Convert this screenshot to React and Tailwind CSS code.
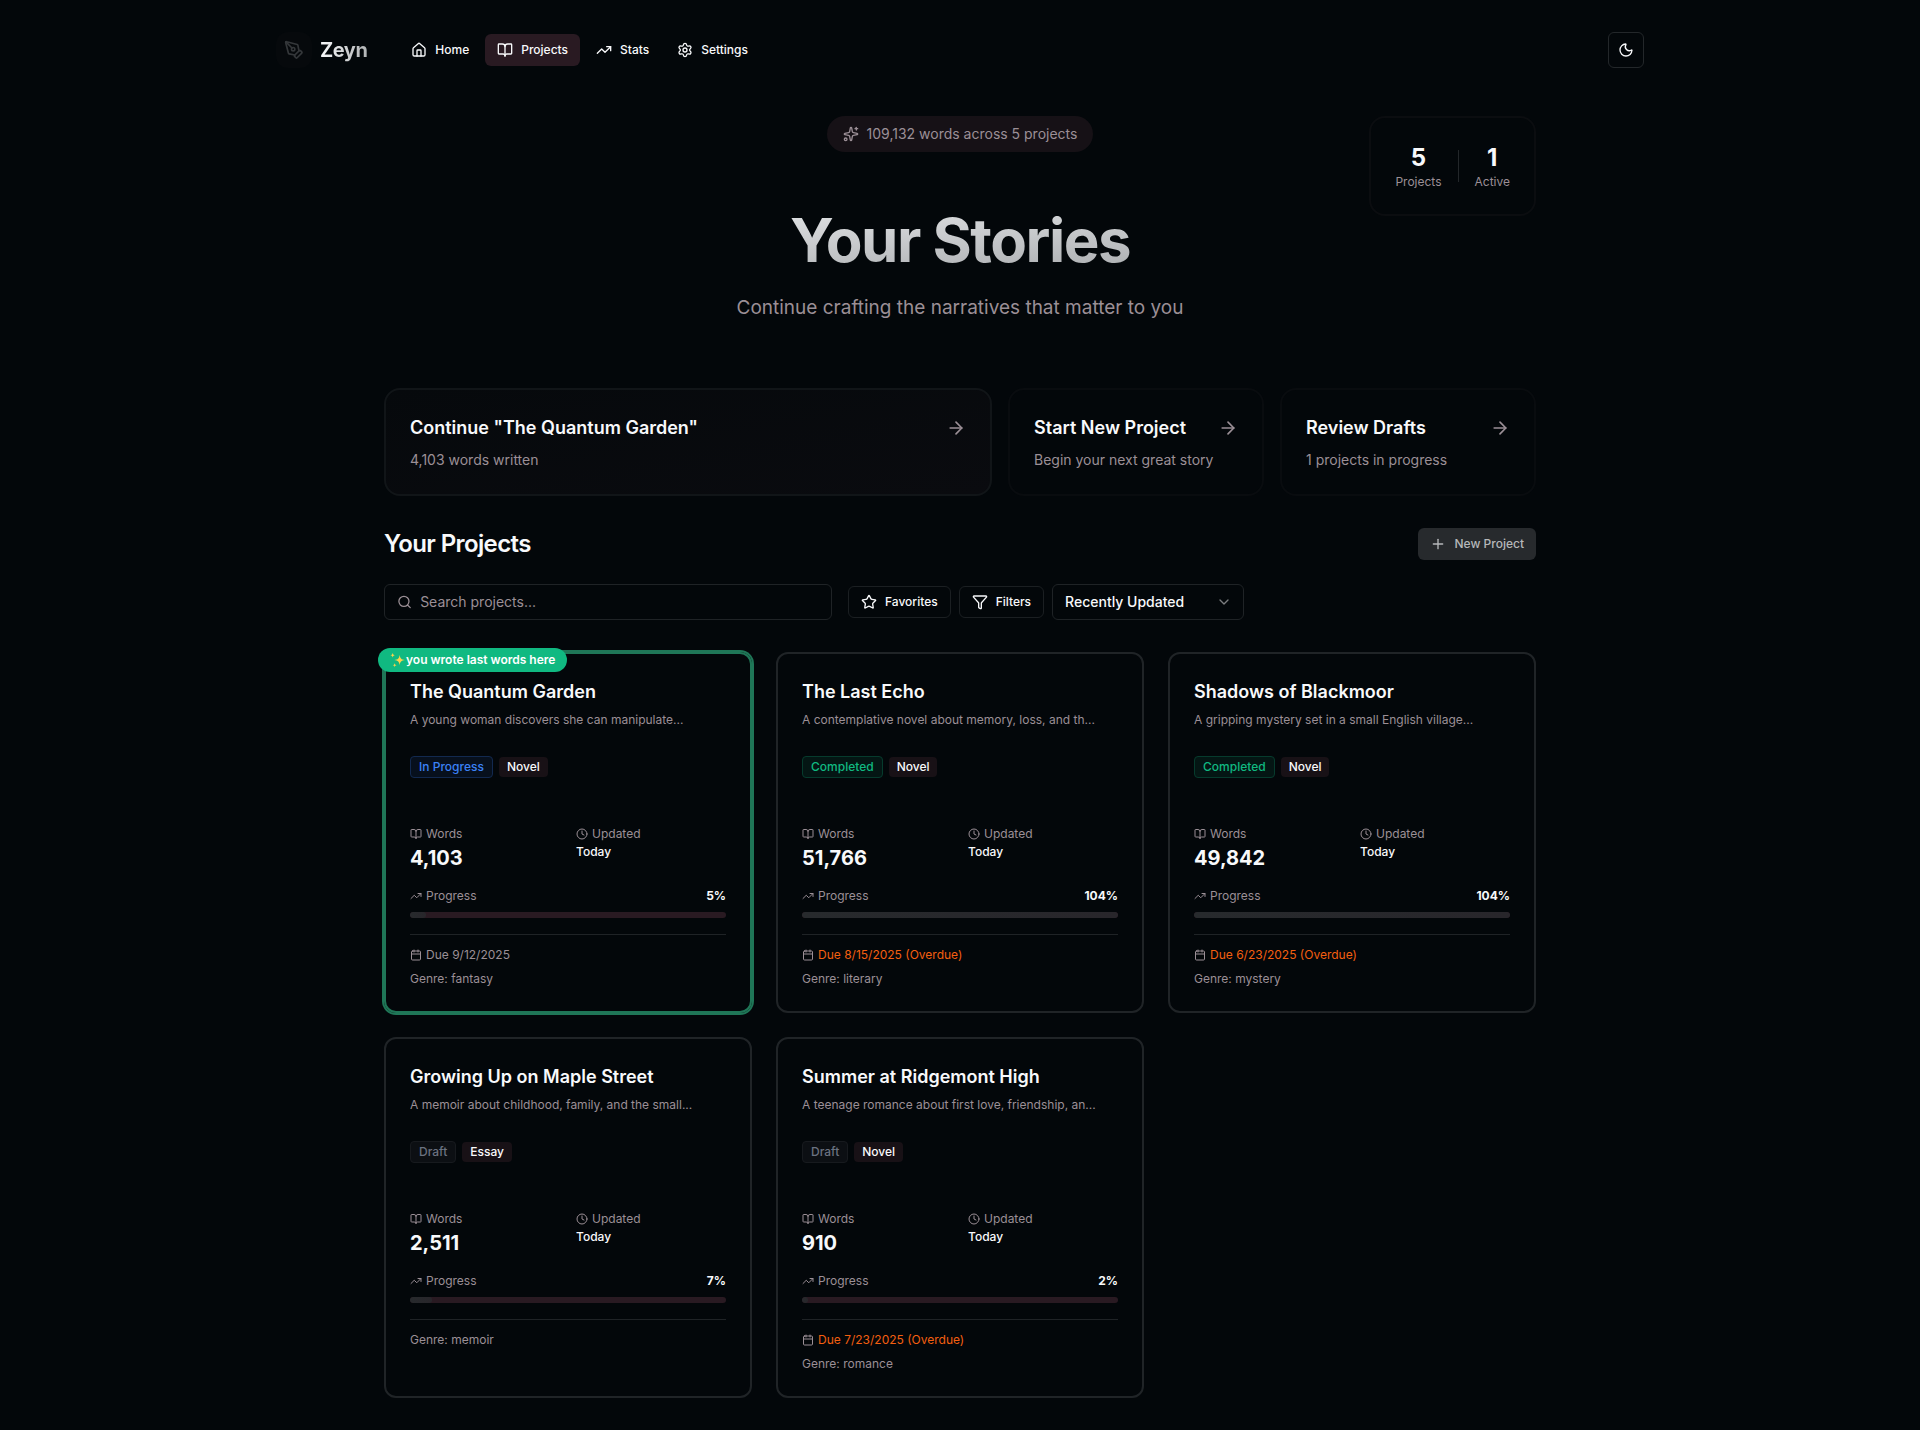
import React from "react";
import {
  Home,
  BookOpen,
  TrendingUp,
  Settings,
  Moon,
  PenTool,
  Sparkles,
  ArrowRight,
  Plus,
  Search,
  Star,
  Funnel,
  ChevronDown,
  Clock,
  Calendar,
} from "lucide-react";

const navItems = [
  { label: "Home", Icon: Home },
  { label: "Projects", Icon: BookOpen, active: true },
  { label: "Stats", Icon: TrendingUp },
  { label: "Settings", Icon: Settings },
];

const projects = [
  { title: "The Quantum Garden", desc: "A young woman discovers she can manipulate...", status: "In Progress", type: "Novel", words: "4,103", percent: 5, due: "9/12/2025", genre: "fantasy", latest: true },
  { title: "The Last Echo", desc: "A contemplative novel about memory, loss, and th...", status: "Completed", type: "Novel", words: "51,766", percent: 104, due: "8/15/2025", overdue: true, genre: "literary" },
  { title: "Shadows of Blackmoor", desc: "A gripping mystery set in a small English village...", status: "Completed", type: "Novel", words: "49,842", percent: 104, due: "6/23/2025", overdue: true, genre: "mystery" },
  { title: "Growing Up on Maple Street", desc: "A memoir about childhood, family, and the small...", status: "Draft", type: "Essay", words: "2,511", percent: 7, genre: "memoir" },
  { title: "Summer at Ridgemont High", desc: "A teenage romance about first love, friendship, an...", status: "Draft", type: "Novel", words: "910", percent: 2, due: "7/23/2025", overdue: true, genre: "romance" },
];

const statusStyles = {
  "In Progress": "border-[#12294f] bg-[#07101d] text-[#3b82f6]",
  Completed: "border-[#063b2d] bg-[#041614] text-[#10b981]",
  Draft: "border-[#171a1e] bg-[#0c0f13] text-[#6b7280]",
};

function Header() {
  return (
    <header className="mx-auto flex w-full max-w-[1400px] items-center justify-between px-4 py-8">
      <div className="flex items-center gap-8">
        <a href="#" className="flex items-center gap-2">
          <span className="flex size-9 items-center justify-center rounded-xl bg-[#06090c] text-[#34373a]">
            <PenTool className="size-5" />
          </span>
          <span className="bg-linear-to-r from-[#f8f9fb] to-[#b2b4b6] bg-clip-text text-xl font-bold tracking-tight text-transparent">
            Zeyn
          </span>
        </a>
        <nav className="flex items-center gap-1">
          {navItems.map(({ label, Icon, active }) => (
            <a
              key={label}
              href="#"
              className={`flex h-8 items-center gap-2 rounded-md px-3 text-xs font-medium ${active ? "bg-[#291a22]" : ""}`}
            >
              <Icon className="size-4" />
              {label}
            </a>
          ))}
        </nav>
      </div>
      <button aria-label="Toggle theme" className="flex size-9 items-center justify-center rounded-md border border-[#23272a]">
        <Moon className="size-4" />
      </button>
    </header>
  );
}

function Stat({ value, label }) {
  return (
    <div className="text-center">
      <div className="text-2xl leading-8 font-bold">{value}</div>
      <div className="text-xs text-[#9b8f96]">{label}</div>
    </div>
  );
}

function Hero() {
  return (
    <section className="relative flex flex-col items-center pt-4">
      <div className="flex h-9 items-center gap-2 rounded-full bg-[#161116] px-4 text-sm text-[#9b8f96]">
        <Sparkles className="size-4" />
        109,132 words across 5 projects
      </div>
      <div className="absolute top-4 right-0 flex h-[100px] items-center gap-4 rounded-2xl border-2 border-[#0b0d10] px-6">
        <Stat value="5" label="Projects" />
        <div className="h-8 w-px bg-[#23272a]" />
        <Stat value="1" label="Active" />
      </div>
      <h1 className="mt-12 w-full bg-linear-to-br from-[#f8f9fb] to-[#96999c] bg-clip-text text-center text-6xl leading-[80px] font-bold tracking-tight text-transparent">
        Your Stories
      </h1>
      <p className="mt-3 text-[19px] leading-8 text-[#9b8f96]">Continue crafting the narratives that matter to you</p>
    </section>
  );
}

function ActionCard({ title, text, featured }) {
  return (
    <a
      href="#"
      className={`rounded-2xl border-2 p-6 ${featured ? "border-[#111518] bg-linear-to-br from-[#06090c] to-[#0a0b0f]" : "border-[#090c0f]"}`}
    >
      <div className="mb-2 flex items-center justify-between">
        <h3 className="text-lg leading-7 font-semibold">{title}</h3>
        <ArrowRight className="size-5 text-[#9b8f96]" />
      </div>
      <p className="text-sm text-[#9b8f96]">{text}</p>
    </a>
  );
}

function Toolbar() {
  const outline = "flex h-8 items-center gap-2 rounded-md border border-[#1b1f22] px-3 text-xs font-medium";
  return (
    <div className="mt-6 flex items-center gap-4">
      <label className="flex h-9 w-full max-w-md items-center gap-2 rounded-md border border-[#1f2326] px-3 text-[#9b8f96]">
        <Search className="size-4" />
        <input
          type="search"
          aria-label="Search projects"
          placeholder="Search projects..."
          className="w-full bg-transparent text-sm text-white outline-none placeholder:text-[#9b8f96]"
        />
      </label>
      <div className="flex items-center gap-2">
        <button className={outline}>
          <Star className="size-4" />
          Favorites
        </button>
        <button className={outline}>
          <Funnel className="size-4" />
          Filters
        </button>
        <div className="relative flex items-center">
          <select
            aria-label="Sort projects"
            className="h-9 w-48 appearance-none rounded-md border border-[#1f2326] bg-[#03070a] px-3 text-sm font-medium outline-none"
          >
            <option>Recently Updated</option>
            <option>Title</option>
            <option>Word Count</option>
          </select>
          <ChevronDown className="pointer-events-none absolute right-3 size-4 text-[#7b7d80]" />
        </div>
      </div>
    </div>
  );
}

function ProjectCard({ project }) {
  const { title, desc, status, type, words, percent, due, overdue, genre, latest } = project;
  return (
    <article
      className={`relative rounded-xl border-2 p-6 text-xs text-[#9b8f96] ${latest ? "border-[#1f7657] ring-2 ring-[#1f7657]" : "border-[#202427]"}`}
    >
      {latest && (
        <div className="absolute -top-1.5 -left-2 flex h-6 items-center rounded-full bg-[#10b981] px-3 font-semibold text-white">
          <svg viewBox="0 0 24 24" className="size-4" fill="#fcd34d" aria-hidden="true">
            <path d="M14.500 4c.7 5.500 2.300 7.300 8 8-5.700.7-7.300 2.500-8 8-.7-5.500-2.300-7.300-8-8 5.700-.7 7.300-2.500 8-8Z" />
            <path d="M4 1c.4 2.600 1 3.300 3.500 3.700C5 5.100 4.400 5.800 4 8.400 3.600 5.800 3 5.100.5 4.700 3 4.300 3.600 3.600 4 1ZM7 16.500c.3 2.300.9 3 3 3.300-2.100.3-2.700 1-3 3.200-.3-2.200-.9-2.900-3-3.200 2.100-.3 2.700-1 3-3.300Z" />
          </svg>
          you wrote last words here
        </div>
      )}
      <h3 className="text-lg leading-7 font-semibold text-[#f8f9fb]">{title}</h3>
      <p className="mt-1 truncate leading-5">{desc}</p>
      <div className="mt-6 flex h-[26px] items-center gap-1.5 font-medium">
        <span className={`rounded border px-2 py-0.5 ${statusStyles[status]}`}>{status}</span>
        <span className="rounded bg-[#181116] px-2 py-0.5 text-[#f8f9fb]">{type}</span>
      </div>
      <div className="mt-[46px] grid grid-cols-2 gap-4">
        <div>
          <div className="flex items-center gap-1">
            <BookOpen className="size-3" />
            Words
          </div>
          <div className="mt-0.5 text-xl leading-7 font-bold text-[#f8f9fb]">{words}</div>
        </div>
        <div>
          <div className="flex items-center gap-1">
            <Clock className="size-3" />
            Updated
          </div>
          <div className="mt-0.5 font-medium text-[#f8f9fb]">Today</div>
        </div>
      </div>
      <div className="mt-4 flex items-center justify-between">
        <span className="flex items-center gap-1">
          <TrendingUp className="size-3" />
          Progress
        </span>
        <span className="font-bold text-[#f8f9fb]">{percent}%</span>
      </div>
      <div className="mt-2 h-1.5 overflow-hidden rounded-full bg-[#291a22]">
        <div className="h-full rounded-full bg-linear-to-r from-[#272a2d] to-[#28262b]" style={{ width: `${Math.min(percent, 100)}%` }} />
      </div>
      <div className="mt-4 flex flex-col gap-2 border-t border-[#1f2326] pt-3">
        {due && (
          <div className="flex items-center gap-1">
            <Calendar className="size-3" />
            <span className={overdue ? "text-[#f45f10]" : ""}>
              Due {due}
              {overdue && " (Overdue)"}
            </span>
          </div>
        )}
        <div>Genre: {genre}</div>
      </div>
    </article>
  );
}

export default function App() {
  return (
    <div className="min-h-screen bg-[#03070a] pb-8 font-['Inter',sans-serif] text-[#f8f9fb]">
      <Header />
      <main className="mx-auto w-full max-w-6xl">
        <Hero />
        <section className="mt-16 grid grid-cols-[38fr_16fr_16fr] gap-4">
          <ActionCard title={'Continue "The Quantum Garden"'} text="4,103 words written" featured />
          <ActionCard title="Start New Project" text="Begin your next great story" />
          <ActionCard title="Review Drafts" text="1 projects in progress" />
        </section>
        <section className="mt-8">
          <div className="flex items-center justify-between">
            <h2 className="text-2xl leading-8 font-semibold tracking-tight">Your Projects</h2>
            <button className="flex h-8 items-center gap-2 rounded-md bg-[#272a2d] px-3 text-xs font-medium text-[#b6b8ba]">
              <Plus className="size-4" />
              New Project
            </button>
          </div>
          <Toolbar />
          <div className="mt-8 grid grid-cols-3 gap-6">
            {projects.map((project) => (
              <ProjectCard key={project.title} project={project} />
            ))}
          </div>
        </section>
      </main>
    </div>
  );
}
